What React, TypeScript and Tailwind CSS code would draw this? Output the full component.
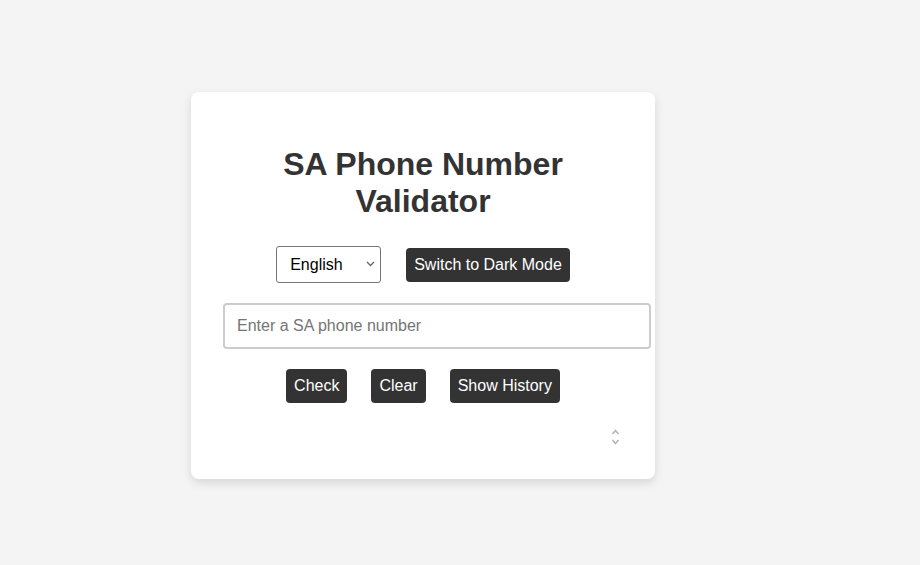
import React, { useState } from 'react';

export default function App() {
  const [phone, setPhone] = useState('');
  const [lang, setLang] = useState('en');

  return (
    <div className="min-h-screen w-full bg-[#f4f4f4] pl-[191px] pt-[92px] font-['Liberation_Sans',Arial,sans-serif] text-[#333]">
      <div className="flex w-[464px] flex-col items-center rounded-lg bg-white px-8 pt-[54px] pb-[33px] shadow-[0_4px_10px_rgba(0,0,0,0.12)]">
        <h1 className="w-[320px] text-center text-[32px] font-bold leading-[37px]">
          SA Phone Number Validator
        </h1>

        <div className="mt-[26px] flex items-center gap-[25px]">
          <div className="relative">
            <select
              value={lang}
              onChange={(e) => setLang(e.target.value)}
              className="h-[37px] w-[105px] appearance-none rounded-[3px] border border-[#767676] bg-white pl-[13px] text-base text-black outline-none"
            >
              <option value="en">English</option>
              <option value="af">Afrikaans</option>
              <option value="zu">isiZulu</option>
            </select>
            <svg
              className="pointer-events-none absolute right-[6px] top-[15px]"
              width="9"
              height="6"
              viewBox="0 0 9 6"
              fill="none"
              stroke="#666"
              strokeWidth="1.3"
            >
              <path d="M1 1l3.5 3.5L8 1" />
            </svg>
          </div>
          <button className="h-[34px] rounded bg-[#333] px-2 text-base text-white">
            Switch to Dark Mode
          </button>
        </div>

        <input
          value={phone}
          onChange={(e) => setPhone(e.target.value)}
          placeholder="Enter a SA phone number"
          className="mt-5 box-content h-[18px] w-[400px] self-start rounded border-2 border-[#ccc] px-3 py-[12px] text-base text-black outline-none placeholder:text-[#757575]"
        />

        <div className="mt-5 flex items-center gap-6">
          <button className="h-[34px] rounded bg-[#333] px-2 text-base text-white">Check</button>
          <button className="h-[34px] rounded bg-[#333] px-2 text-base text-white">Clear</button>
          <button className="h-[34px] rounded bg-[#333] px-2 text-base text-white">Show History</button>
        </div>

        <div className="mt-[25px] flex w-full justify-end pr-[3px]">
          <svg width="9" height="18" viewBox="0 0 9 18" fill="none" stroke="#b5b5b5" strokeWidth="1.6">
            <path d="M1.5 6l3-3.5 3 3.5" />
            <path d="M1.5 12l3 3.5 3-3.5" />
          </svg>
        </div>
      </div>
    </div>
  );
}
